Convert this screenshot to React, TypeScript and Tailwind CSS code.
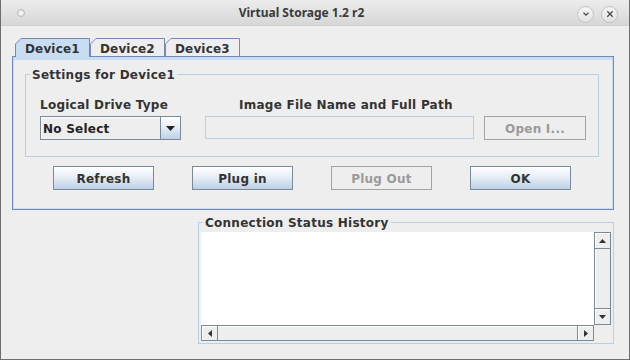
import React from "react";

const TAB_LINE = "#7588b8";

function TitleBar() {
  return (
    <div className="h-[26px] flex items-center bg-linear-to-b from-[#ececec] to-[#d7d7d7] border-b border-[#cfcfcf] font-['Noto_Sans',sans-serif]">
      <div className="pl-[16px] w-[25px] shrink-0">
        <div className="w-[8px] h-[8px] rounded-full border border-[#b9b9b9] bg-radial from-[#ffffff] to-[#dcdcdc]" />
      </div>
      <div className="flex-1 text-center text-[12px] font-bold text-[#3a3a3a] leading-[16px]">
        Virtual Storage 1.2 r2
      </div>
      <div className="flex gap-[7px] pr-[11px] mt-[3px]">
        <div className="w-[17px] h-[17px] rounded-full border border-[#c2c2c2] bg-linear-to-b from-[#f6f6f6] to-[#e2e2e2] flex items-center justify-center">
          <svg width="8" height="6" viewBox="0 0 8 6">
            <path d="M1.5 1.8 L4 4.2 L6.5 1.8" fill="none" stroke="#4a4a4a" strokeWidth="1.3" />
          </svg>
        </div>
        <div className="w-[17px] h-[17px] rounded-full border border-[#c2c2c2] bg-linear-to-b from-[#f6f6f6] to-[#e2e2e2] flex items-center justify-center">
          <svg width="8" height="8" viewBox="0 0 8 8">
            <path d="M1.3 1.3 L6.7 6.7 M6.7 1.3 L1.3 6.7" fill="none" stroke="#4a4a4a" strokeWidth="1.3" />
          </svg>
        </div>
      </div>
    </div>
  );
}

function Tab({ label, selected }: { label: string; selected?: boolean }) {
  const h = selected ? 19 : 18;
  return (
    <div className={`relative w-[75px] shrink-0 ${selected ? "h-[19px] z-10" : "h-[18px]"}`}>
      <svg className="absolute inset-0" width="76" height={h}>
        <path
          d={`M0.5 ${h} V6 L6 0.5 H74.5 V${h}`}
          fill={selected ? "#c8ddf2" : "#eeeeee"}
          stroke={TAB_LINE}
        />
      </svg>
      <span className="relative block pl-[10px] pt-[3px] text-[12px] font-bold leading-[16px] tracking-[0.15px]">
        {label}
      </span>
    </div>
  );
}

function Button({ label, disabled }: { label: string; disabled?: boolean }) {
  return (
    <div
      className={`h-[24px] w-[101px] shrink-0 border flex items-center justify-center pt-[2px] text-[12px] font-bold leading-none tracking-[0.25px] ${
        disabled
          ? "border-[#a3a3a3] bg-[#eeeeee] text-[#9a9a9a]"
          : "border-[#7a8a99] bg-linear-to-b from-[#ffffff] via-[#e4ecf5] to-[#bdd0e6] text-[#333333]"
      }`}
    >
      {label}
    </div>
  );
}

function GroupTitle({ text }: { text: string }) {
  return (
    <span className="absolute left-[4px] top-[-9px] px-[2px] pt-[2px] bg-[#eeeeee] text-[12px] font-bold leading-[14px] tracking-[0.25px] whitespace-nowrap">
      {text}
    </span>
  );
}

function Arrow({ dir }: { dir: "up" | "down" | "left" | "right" }) {
  const d = {
    up: "M0 4 L3.5 0 L7 4 Z",
    down: "M0 0 L7 0 L3.5 4 Z",
    left: "M4 0 L4 7 L0 3.5 Z",
    right: "M0 0 L4 3.5 L0 7 Z",
  }[dir];
  const vertical = dir === "up" || dir === "down";
  return (
    <svg width={vertical ? 7 : 4} height={vertical ? 4 : 7} viewBox={vertical ? "0 0 7 4" : "0 0 4 7"}>
      <path d={d} fill="#333333" />
    </svg>
  );
}

function ScrollBox({ dir, className }: { dir: "up" | "down" | "left" | "right"; className: string }) {
  return (
    <div className={`flex items-center justify-center bg-[#eeeeee] shadow-[inset_1px_1px_0_#ffffff] ${className}`}>
      <Arrow dir={dir} />
    </div>
  );
}

export default function App() {
  return (
    <div className="w-[630px] h-[360px] flex flex-col bg-[#eeeeee] border-x border-b border-[#6e6e6e] overflow-hidden font-['DejaVu_Sans',sans-serif] text-[#333333]">
      <TitleBar />
      <div className="flex-1 flex flex-col pl-[11px] pt-[12px]">
        <div className="relative z-10 h-[18px] pl-[3px] flex items-start">
          <Tab label="Device1" selected />
          <Tab label="Device2" />
          <Tab label="Device3" />
        </div>

        <div className="w-[602px] h-[154px] border border-[#7588b8]">
          <div className="h-full flex flex-col border-x border-b border-t-[3px] border-[#c8ddf2]">
            <div className="relative ml-[11px] mt-[14px] w-[574px] h-[83px] border border-[#b8cfe5]">
              <GroupTitle text="Settings for Device1" />
              <div className="flex items-start pl-[14px] pt-[20px]">
                <div className="w-[141px] shrink-0">
                  <div className="h-[16px] leading-[16px] pt-[2px] mb-[5px] text-[12px] font-bold tracking-[0.25px] whitespace-nowrap">
                    Logical Drive Type
                  </div>
                  <div className="h-[24px] flex border border-[#7a8a99] bg-[#eeeeee]">
                    <div className="flex-1 pl-[2px] pt-[2px] flex items-center text-[12px] font-bold tracking-[0.25px] text-[#222222] shadow-[inset_1px_1px_0_#ffffff]">
                      No Select
                    </div>
                    <div className="w-[20px] border-l border-[#7a8a99] bg-linear-to-b from-[#ffffff] via-[#e4ecf5] to-[#bdd0e6] flex items-center justify-center">
                      <svg width="9" height="5" viewBox="0 0 9 5">
                        <path d="M0 0 H9 L4.5 5 Z" fill="#222222" />
                      </svg>
                    </div>
                  </div>
                </div>
                <div className="ml-[24px] w-[269px] shrink-0">
                  <div className="h-[16px] leading-[16px] pt-[2px] mb-[5px] pl-[34px] text-[12px] font-bold tracking-[0.25px] whitespace-nowrap">
                    Image File Name and Full Path
                  </div>
                  <div className="h-[23px] border border-[#b8cfe5] bg-[#eeeeee]" />
                </div>
                <div className="ml-[10px] w-[102px] shrink-0 pt-[21px]">
                  <div className="h-[24px] border border-[#a3a3a3] flex items-center justify-center pt-[2px] text-[12px] font-bold tracking-[0.25px] text-[#9a9a9a]">
                    Open I...
                  </div>
                </div>
              </div>
            </div>

            <div className="flex gap-[38px] ml-[39px] mt-[9px]">
              <Button label="Refresh" />
              <Button label="Plug in" />
              <Button label="Plug Out" disabled />
              <Button label="OK" />
            </div>
          </div>
        </div>

        <div className="relative ml-[186px] mt-[12px] w-[416px] h-[122px] border border-[#b8cfe5] pl-[2px] pr-[2px] pt-[9px] pb-[2px]">
          <GroupTitle text="Connection Status History" />
          <div className="grid grid-cols-[393px_17px] grid-rows-[93px_16px] h-[109px]">
            <div className="bg-white" />
            <div className="flex flex-col border border-[#7a8a99] bg-[#eeeeee]">
              <ScrollBox dir="up" className="h-[16px] border-b border-[#7a8a99]" />
              <div className="flex-1 shadow-[inset_1px_0_0_#ffffff]" />
              <ScrollBox dir="down" className="h-[16px] border-t border-[#7a8a99]" />
            </div>
            <div className="flex border border-[#7a8a99] bg-[#eeeeee]">
              <ScrollBox dir="left" className="w-[16px] border-r border-[#7a8a99]" />
              <div className="flex-1 shadow-[inset_0_1px_0_#ffffff]" />
              <ScrollBox dir="right" className="w-[16px] border-l border-[#7a8a99]" />
            </div>
            <div />
          </div>
        </div>
      </div>
    </div>
  );
}
